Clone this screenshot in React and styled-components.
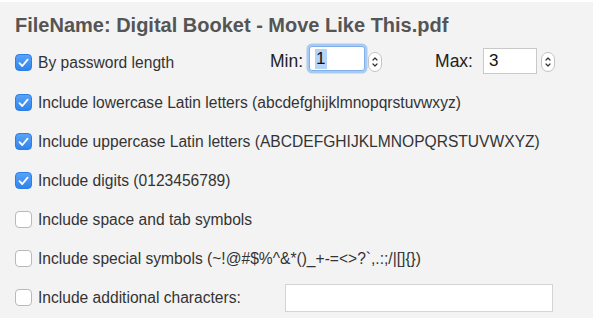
import React from "react";
import styled, { createGlobalStyle } from "styled-components";

const Global = createGlobalStyle`
  html, body { margin: 0; padding: 0; background: #ffffff; }
  body { font-family: "Liberation Sans", Arial, sans-serif; }
`;

const Frame = styled.div`
  width: 600px;
  height: 321px;
  background: #ffffff;
  padding: 2px 7px 3px 0;
  box-sizing: border-box;
`;

const Panel = styled.div`
  height: 100%;
  background: #f3f3f3;
  padding-left: 15px;
  display: flex;
  flex-direction: column;
`;

const Title = styled.div`
  height: 40px;
  display: flex;
  align-items: center;
  padding-top: 7px;
  box-sizing: border-box;
  font-weight: bold;
  font-size: 20px;
  color: #555555;
`;

const Row = styled.div`
  height: ${(p) => p.$h || 39}px;
  display: flex;
  align-items: center;
`;

const Box = styled.span`
  width: 17px;
  height: 17px;
  border-radius: 4px;
  box-sizing: border-box;
  flex: none;
  display: flex;
  align-items: center;
  justify-content: center;
  background: ${(p) => (p.$on ? "linear-gradient(#5aa3f7, #2f84ec)" : "#ffffff")};
  border: 1px solid ${(p) => (p.$on ? "#2c7fe6" : "#b9b9b9")};
`;

const Label = styled.span`
  margin-left: 6px;
  font-size: 15.6px;
  color: #333333;
  width: ${(p) => (p.$w ? `${p.$w}px` : "auto")};
  flex: none;
`;

const FieldLabel = styled.span`
  font-size: 17.5px;
  color: #222222;
  margin-right: ${(p) => p.$gap}px;
  margin-left: ${(p) => p.$left || 0}px;
  margin-top: -3px;
`;

const NumInput = styled.div`
  width: ${(p) => p.$w}px;
  height: ${(p) => p.$hh}px;
  box-sizing: border-box;
  background: #ffffff;
  border: 1px solid ${(p) => (p.$focus ? "#7fb0ea" : "#c9c9c9")};
  box-shadow: ${(p) => (p.$focus ? "0 0 0 2.5px #a9cbf3" : "none")};
  border-radius: ${(p) => (p.$focus ? 3 : 0)}px;
  display: flex;
  align-items: center;
  padding-left: 5px;
  font-size: 17px;
  color: #111111;
  margin-top: ${(p) => p.$mt || 0}px;
`;

const Sel = styled.span`
  background: #b6d4f8;
  padding: 0 1px;
`;

const Stepper = styled.div`
  width: 14px;
  height: 20px;
  margin-left: ${(p) => p.$ml}px;
  border: 1px solid #c4c4c4;
  border-radius: 7px;
  background: #ffffff;
  box-sizing: border-box;
  display: flex;
  align-items: center;
  justify-content: center;
  margin-top: -2px;
`;

const TextInput = styled.div`
  width: 268px;
  height: 28px;
  box-sizing: border-box;
  background: #ffffff;
  border: 1px solid #d4d4d4;
  margin-left: auto;
  margin-right: 40px;
`;

const Check = () => (
  <svg width="11" height="10" viewBox="0 0 11 10">
    <path d="M1.5 5.2 L4.3 8 L9.6 1.6" fill="none" stroke="#ffffff" strokeWidth="1.8" strokeLinecap="round" strokeLinejoin="round" />
  </svg>
);

const Arrows = () => (
  <svg width="8" height="14" viewBox="0 0 8 14">
    <path d="M2 5 L4 3 L6 5" fill="none" stroke="#333" strokeWidth="1.2" strokeLinecap="round" strokeLinejoin="round" />
    <path d="M2 9 L4 11 L6 9" fill="none" stroke="#333" strokeWidth="1.2" strokeLinecap="round" strokeLinejoin="round" />
  </svg>
);

const CheckBox = ({ on }) => <Box $on={on}>{on && <Check />}</Box>;

const options = [
  { on: true, text: "Include lowercase Latin letters (abcdefghijklmnopqrstuvwxyz)" },
  { on: true, text: "Include uppercase Latin letters (ABCDEFGHIJKLMNOPQRSTUVWXYZ)" },
  { on: true, text: "Include digits (0123456789)" },
  { on: false, text: "Include space and tab symbols" },
  { on: false, text: "Include special symbols (~!@#$%^&*()_+-=<>?`,.:;/|[]{})" },
];

export default function App() {
  return (
    <>
      <Global />
      <Frame>
        <Panel>
          <Title>FileName: Digital Booket - Move Like This.pdf</Title>
          <Row $h={41}>
            <CheckBox on />
            <Label $w={232}>By password length</Label>
            <FieldLabel $gap={6}>Min:</FieldLabel>
            <NumInput $w={56} $hh={25} $mt={-8} $focus>
              <Sel>1</Sel>
            </NumInput>
            <Stepper $ml={3}>
              <Arrows />
            </Stepper>
            <FieldLabel $gap={10} $left={53}>Max:</FieldLabel>
            <NumInput $w={54} $hh={26} $mt={-3}>
              3
            </NumInput>
            <Stepper $ml={4}>
              <Arrows />
            </Stepper>
          </Row>
          {options.map((o) => (
            <Row key={o.text}>
              <CheckBox on={o.on} />
              <Label>{o.text}</Label>
            </Row>
          ))}
          <Row>
            <CheckBox />
            <Label>Include additional characters:</Label>
            <TextInput />
          </Row>
        </Panel>
      </Frame>
    </>
  );
}
